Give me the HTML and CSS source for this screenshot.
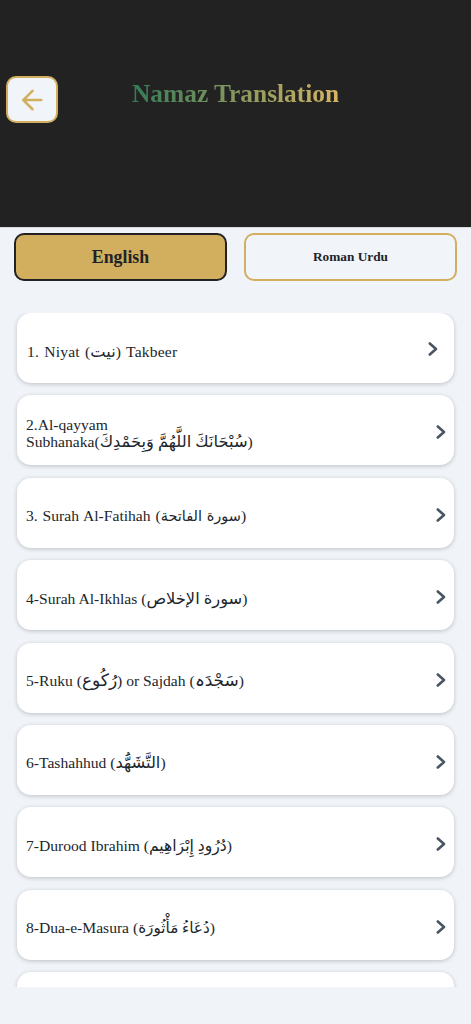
FILE: index.html
```html
<!DOCTYPE html>
<html lang="en">
<head>
<meta charset="utf-8">
<title>Namaz Translation</title>
<link rel="stylesheet" href="styles.css">
</head>
<body>
<header class="header">
  <button class="back" aria-label="Back">
    <svg class="back-icon" viewBox="0 0 24 24" width="24" height="24"><path d="M22 12H2.5M12.5 2 2.5 12l10 10" fill="none" stroke="#d1af5e" stroke-width="2.800" stroke-linecap="round" stroke-linejoin="round" transform="translate(1 1) scale(.92)"/></svg>
  </button>
  <h1 class="title">Namaz Translation</h1>
</header>
<div class="tabs">
  <button class="tab tab-active">English</button>
  <button class="tab tab-idle">Roman Urdu</button>
</div>
<main class="list">
  <a class="card card-first"><span class="label spaced-wide">1. Niyat (<span class="ar-md">نیت</span>) Takbeer</span><svg class="chev" viewBox="0 0 10 14" width="10" height="14"><path d="M1.800 1.500 8 7l-6.200 5.500" fill="none" stroke="#4a5563" stroke-width="2.600" stroke-linecap="round" stroke-linejoin="round"/></svg></a>
  <a class="card"><span class="label">2.Al-qayyam<br>Subhanaka(<span class="ar-md">سُبْحَانَكَ اللَّهُمَّ وَبِحَمْدِكَ</span>)</span><svg class="chev" viewBox="0 0 10 14" width="10" height="14"><path d="M1.800 1.500 8 7l-6.200 5.500" fill="none" stroke="#4a5563" stroke-width="2.600" stroke-linecap="round" stroke-linejoin="round"/></svg></a>
  <a class="card"><span class="label spaced">3. Surah Al-Fatihah (<span class="ar-sm">سورة الفاتحة</span>)</span><svg class="chev" viewBox="0 0 10 14" width="10" height="14"><path d="M1.800 1.500 8 7l-6.200 5.500" fill="none" stroke="#4a5563" stroke-width="2.600" stroke-linecap="round" stroke-linejoin="round"/></svg></a>
  <a class="card"><span class="label">4-Surah Al-Ikhlas (<span class="ar-md">سورة الإخلاص</span>)</span><svg class="chev" viewBox="0 0 10 14" width="10" height="14"><path d="M1.800 1.500 8 7l-6.200 5.500" fill="none" stroke="#4a5563" stroke-width="2.600" stroke-linecap="round" stroke-linejoin="round"/></svg></a>
  <a class="card"><span class="label">5-Ruku (<span class="ar-lg">رُكُوع</span>) or Sajdah (<span class="ar-lg">سَجْدَہ</span>)</span><svg class="chev" viewBox="0 0 10 14" width="10" height="14"><path d="M1.800 1.500 8 7l-6.200 5.500" fill="none" stroke="#4a5563" stroke-width="2.600" stroke-linecap="round" stroke-linejoin="round"/></svg></a>
  <a class="card"><span class="label">6-Tashahhud (<span class="ar-md">التَّشَهُّد</span>)</span><svg class="chev" viewBox="0 0 10 14" width="10" height="14"><path d="M1.800 1.500 8 7l-6.200 5.500" fill="none" stroke="#4a5563" stroke-width="2.600" stroke-linecap="round" stroke-linejoin="round"/></svg></a>
  <a class="card"><span class="label">7-Durood Ibrahim (دُرُودِ إِبْرَاهِيم)</span><svg class="chev" viewBox="0 0 10 14" width="10" height="14"><path d="M1.800 1.500 8 7l-6.200 5.500" fill="none" stroke="#4a5563" stroke-width="2.600" stroke-linecap="round" stroke-linejoin="round"/></svg></a>
  <a class="card"><span class="label">8-Dua-e-Masura (<span class="ar-xs">دُعَاءُ مَأْثُورَة</span>)</span><svg class="chev" viewBox="0 0 10 14" width="10" height="14"><path d="M1.800 1.500 8 7l-6.200 5.500" fill="none" stroke="#4a5563" stroke-width="2.600" stroke-linecap="round" stroke-linejoin="round"/></svg></a>
  <a class="card"></a>
</main>
</body>
</html>
```
FILE: styles.css
```css
* { box-sizing: border-box; }
html, body { margin: 0; height: 1024px; overflow: hidden; }
body {
  background: #f0f4f9;
  font-family: "Liberation Serif", "DejaVu Sans", serif;
  color: #1f2328;
}
.header {
  height: 228px;
  background: #222222;
  padding: 76px 0 0 6px;
  position: relative;
  border-bottom: 1px solid #d9d9d9;
}
.back {
  width: 52px;
  height: 47px;
  border: 2px solid #d1af5e;
  border-radius: 10px;
  background: #f1f5fa;
  padding: 0;
  display: flex;
  align-items: center;
  justify-content: center;
}
.title {
  position: absolute;
  left: 132px;
  top: 78px;
  width: 207px;
  margin: 0;
  font-size: 25.400px;
  line-height: 30px;
  font-weight: 700;
  white-space: nowrap;
  background: linear-gradient(90deg, #347a58, #d6b462);
  -webkit-background-clip: text;
  background-clip: text;
  color: transparent;
}
.tabs {
  display: flex;
  gap: 17px;
  padding: 5px 14px 0;
}
.tab {
  flex: 1;
  height: 48px;
  border-radius: 10px;
  font-family: "Liberation Serif", serif;
  font-weight: 700;
  color: #1f2328;
  padding: 0;
}
.tab-active {
  background: #d1af5e;
  border: 2px solid #222222;
  font-size: 17.800px;
}
.tab-idle {
  background: #f1f5fa;
  border: 2px solid #d1af5e;
  font-size: 13.300px;
}
.list {
  height: 674px;
  margin-top: 32px;
  padding: 0 17px;
  display: flex;
  flex-direction: column;
  gap: 12.400px;
  overflow: hidden;
}
.card {
  flex: none;
  height: 70px;
  background: #fff;
  border-radius: 14px;
  box-shadow: 0 1px 4px rgba(0, 0, 0, .22);
  display: flex;
  align-items: center;
  justify-content: space-between;
  padding: 6px 8px 0 9px;
}
.card-first { padding-right: 16px; padding-left: 10px; }
.label {
  font-size: 15.600px;
  line-height: 17px;
  color: #22262b;
}
.spaced { word-spacing: 1px; }
.spaced-wide { word-spacing: 1px; letter-spacing: .2px; }
.ar-lg { font-size: 17px; }
.ar-md { font-size: 16.300px; }
.ar-sm { font-size: 14.500px; }
.ar-xs { font-size: 15.200px; }
.chev { margin-top: -2px; }
.card-first .chev { margin-top: -4px; }
```
